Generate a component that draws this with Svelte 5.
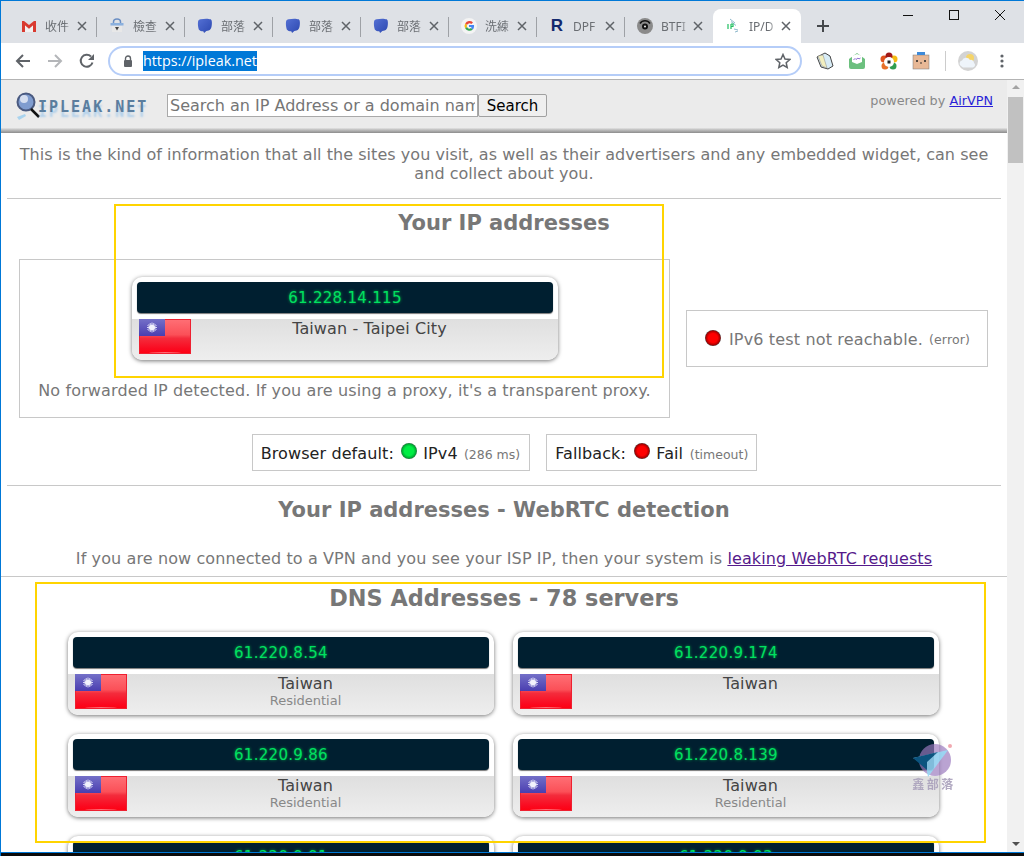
<script>
	const tabs = [
		{ icon: 'gmail', title: '收件' },
		{ icon: 'check', title: '檢查' },
		{ icon: 'bubble', title: '部落' },
		{ icon: 'bubble', title: '部落' },
		{ icon: 'bubble', title: '部落' },
		{ icon: 'google', title: '洗練' },
		{ icon: 'r', title: 'DPF' },
		{ icon: 'eye', title: 'BTFI' },
		{ icon: 'ip', title: 'IP/D', active: true }
	];

	const servers = [
		{ ip: '61.220.8.54', kind: 'Residential' },
		{ ip: '61.220.9.174', kind: '' },
		{ ip: '61.220.9.86', kind: 'Residential' },
		{ ip: '61.220.8.139', kind: 'Residential' },
		{ ip: '61.220.9.91', kind: 'Residential' },
		{ ip: '61.220.9.93', kind: 'Residential' }
	];
</script>

{#snippet flag()}
	<svg class="flag" width="52" height="35" viewBox="0 0 52 35">
		<defs>
			<linearGradient id="red" x1="0" y1="0" x2="0" y2="1">
				<stop offset="0" stop-color="#ff7076" />
				<stop offset="0.45" stop-color="#fb5058" />
				<stop offset="0.55" stop-color="#f42c3c" />
				<stop offset="0.85" stop-color="#fa0a20" />
				<stop offset="1" stop-color="#ff0010" />
			</linearGradient>
			<linearGradient id="blue" x1="0" y1="0" x2="0" y2="1">
				<stop offset="0" stop-color="#7470c8" />
				<stop offset="1" stop-color="#4a3eb0" />
			</linearGradient>
			<filter id="soft"><feGaussianBlur stdDeviation="0.35" /></filter>
		</defs>
		<rect width="52" height="35" fill="url(#red)" />
		<ellipse cx="26" cy="35" rx="18" ry="2" fill="#ff9aa0" opacity="0.7" />
		<rect x="0.5" y="0.5" width="51" height="34" fill="none" stroke="#ee2030" />
		<rect x="0" y="0" width="26" height="17" fill="url(#blue)" />
		<g filter="url(#soft)">
			<g stroke="#e8e8fa" stroke-width="0.9">
				<path d="M13 3.500v10M8 8.500h10M9.500 5l7 7M16.500 5l-7 7M11 4l4 9M15 4l-4 9M8.500 6.500l9 4M17.500 6.500l-9 4" />
			</g>
			<circle cx="13" cy="8.500" r="2.800" fill="#f2f2fc" />
		</g>
	</svg>
{/snippet}

{#snippet card(ip, top, sub)}
	<div class="card">
		<div class="ip">{ip}</div>
		<div class="info">
			{@render flag()}
			<div class="place">
				<div class="top">{top}</div>
				{#if sub}<div class="sub">{sub}</div>{/if}
			</div>
		</div>
	</div>
{/snippet}

<div class="window">
	<div class="strip">
		{#each tabs as tab}
			<div class="tab" class:active={tab.active}>
				<span class="fav">
					{#if tab.icon === 'gmail'}
						<svg width="16" height="16" viewBox="0 0 16 16"><path d="M1 3h2l5 4 5-4h2v11h-3V7.500L8 11 4 7.500V14H1z" fill="#d93a30" /><path d="M4 14V7.500L8 11l4-3.500V14" fill="#f1f1f1" /></svg>
					{:else if tab.icon === 'check'}
						<svg width="16" height="16" viewBox="0 0 16 16"><path d="M4.500 5V4a3.500 3 0 0 1 7 0v1" fill="none" stroke="#6a8ec4" stroke-width="1.500" /><rect x="1.500" y="5" width="13" height="2.500" fill="#8ab0de" /><rect x="3" y="8" width="10" height="6" fill="#e8e8e8" /><path d="M6 9h4l-2 3.500z" fill="#444" /></svg>
					{:else if tab.icon === 'bubble'}
						<svg width="18" height="18" viewBox="0 0 18 18"><defs><linearGradient id="bub" x1="0" y1="0" x2="1" y2="1"><stop offset="0" stop-color="#5470d4" /><stop offset="1" stop-color="#2c48b0" /></linearGradient></defs><path d="M4 1.500C8 .5 13 .5 15.500 1.500 17 2.500 17 6 16.500 9 16 12 15 13.500 13 14L10.500 14.500 8 17 7 15C5 15 3 14.500 2 13 1 10 .8 6 1.200 4 1.500 2.500 2.500 2 4 1.500z" fill="url(#bub)" /></svg>
					{:else if tab.icon === 'google'}
						<svg width="16" height="16" viewBox="0 0 16 16"><circle cx="8" cy="8" r="8" fill="#f4f4f4" /><path d="M12 4.500A5 5 0 0 0 4.200 5.500L6 7a2.800 2.800 0 0 1 4.300-1z" fill="#e8493a" /><path d="M4.200 5.500a5 5 0 0 0 0 5L6 9a2.800 2.800 0 0 1 0-2z" fill="#f5bb12" /><path d="M4.200 10.500a5 5 0 0 0 7.600 1L10 10a2.800 2.800 0 0 1-4-1z" fill="#35a853" /><path d="M13 7H8v2h2.700c-.2.500-.4.800-.7 1l1.800 1.500C12.800 10.500 13.300 8.800 13 7z" fill="#4486f4" /></svg>
					{:else if tab.icon === 'r'}
						<span class="rmark">R</span>
					{:else if tab.icon === 'eye'}
						<svg width="16" height="16" viewBox="0 0 16 16"><circle cx="8" cy="8" r="8" fill="#8a8a8a" /><path d="M3 5.500a6 6 0 0 1 10 0" fill="none" stroke="#111" stroke-width="1.500" /><circle cx="8" cy="8.500" r="3" fill="#111" /><circle cx="8" cy="8.500" r="1" fill="#eee" /></svg>
					{:else}
						<svg width="16" height="16" viewBox="0 0 16 16"><path d="M5 1l5 4M6 3.500l5 4M9 11l4 1M10 14l3-1" stroke="#8fb9cc" fill="none" /><path d="M3 6v5M6 6v5M6 6h2v2.500H6" stroke="#1fbf5f" stroke-width="1.200" fill="none" /></svg>
					{/if}
				</span>
				<span class="title">{tab.title}</span>
				<svg class="x" width="10" height="10" viewBox="0 0 10 10"><path d="M1 1l8 8M9 1l-8 8" stroke="#5f6368" stroke-width="1.500" /></svg>
			</div>
		{/each}
		<svg class="plus" width="14" height="14" viewBox="0 0 14 14"><path d="M7 1v12M1 7h12" stroke="#45484c" stroke-width="2" /></svg>
		<div class="controls">
			<svg width="46" height="30" viewBox="0 0 46 30"><path d="M18 14.500h10" stroke="#111" /></svg>
			<svg width="46" height="30" viewBox="0 0 46 30"><rect x="18.500" y="9.500" width="9" height="9" fill="none" stroke="#111" /></svg>
			<svg width="46" height="30" viewBox="0 0 46 30"><path d="M18 9l10 10M28 9L18 19" stroke="#111" /></svg>
		</div>
	</div>

	<div class="toolbar">
		<svg class="nav" width="16" height="16" viewBox="0 0 16 16"><path d="M15 8H2M8 2 2 8l6 6" fill="none" stroke="#5f6368" stroke-width="2" /></svg>
		<svg class="nav" width="16" height="16" viewBox="0 0 16 16"><path d="M1 8h13M8 2l6 6-6 6" fill="none" stroke="#b4b6b9" stroke-width="2" /></svg>
		<svg class="nav" width="16" height="16" viewBox="0 0 16 16"><path d="M13.500 9.500A6 6 0 1 1 12 3.500" fill="none" stroke="#5f6368" stroke-width="2" /><path d="M15 1v6H9z" fill="#5f6368" /></svg>
		<div class="address">
			<svg width="10" height="12" viewBox="0 0 10 12"><path d="M2.500 5V3.500a2.500 2.500 0 0 1 5 0V5" fill="none" stroke="#5f6368" stroke-width="1.400" /><rect x="1" y="5" width="8" height="7" rx="1" fill="#5f6368" /></svg>
			<span class="url">https://ipleak.net</span>
			<svg class="star" width="16" height="16" viewBox="0 0 16 16"><path d="M8 1.500l2 4.500 4.800.5-3.600 3.200 1 4.800L8 12.100l-4.200 2.400 1-4.800L1.200 6.500 6 6z" fill="none" stroke="#5f6368" stroke-width="1.500" /></svg>
		</div>
		<div class="exts">
			<svg width="18" height="18" viewBox="0 0 18 18"><path d="M1 5l8-4 5 3 3 10-5 3-7-2z" fill="#d8ecf6" stroke="#444" /><path d="M2 4l5-1 4 13-5-2z" fill="#f2efc0" stroke="#888" stroke-width=".5" /></svg>
			<svg width="18" height="18" viewBox="0 0 18 18"><path d="M1 7l8-6 8 6v8a2 2 0 0 1-2 2H3a2 2 0 0 1-2-2z" fill="#6cc07e" /><path d="M4 4l5-2 5 2v6l-5 2-5-2z" fill="#fff" /><path d="M5.500 8l1.500-1.500 1 1L10 6l1 1 1.500-1" fill="none" stroke="#8d6fd0" /></svg>
			<svg width="18" height="18" viewBox="0 0 18 18"><circle cx="4" cy="7" r="3.500" fill="#e0541f" /><circle cx="14" cy="7" r="3.500" fill="#f5bb12" /><circle cx="5" cy="14" r="3.500" fill="#e8702a" /><circle cx="13" cy="14" r="3.500" fill="#2f9e4f" /><circle cx="9" cy="4" r="3.500" fill="#a01818" /><circle cx="9" cy="10" r="5" fill="#fff" /><rect x="7.500" y="8.500" width="3" height="3" fill="#222" /></svg>
			<svg width="18" height="18" viewBox="0 0 18 18"><rect x="1" y="3" width="16" height="14" fill="#e8b896" stroke="#777" stroke-width=".5" /><rect x="5" y="0" width="8" height="3" fill="#3f8ad8" /><circle cx="5" cy="9" r="1" fill="#222" /><circle cx="13" cy="9" r="1" fill="#222" /><circle cx="9" cy="11" r=".8" fill="#222" /></svg>
		</div>
		<span class="tool-sep"></span>
		<span class="avatar">
			<svg width="20" height="20" viewBox="0 0 20 20"><circle cx="12" cy="7" r="4" fill="#f5d468" /><path d="M3 15a3 3 0 0 1 1-5.500 4.500 4.500 0 0 1 8-.5 3 3 0 0 1 4 3 2.500 2.500 0 0 1-1 4.500H5z" fill="#eef4fa" /></svg>
		</span>
		<svg class="dots" width="4" height="14" viewBox="0 0 4 14"><circle cx="2" cy="2" r="1.600" fill="#5f6368" /><circle cx="2" cy="7" r="1.600" fill="#5f6368" /><circle cx="2" cy="12" r="1.600" fill="#5f6368" /></svg>
	</div>

	<div class="viewport">
		<main class="page">
			<header class="head">
				<div class="logo">
					<svg width="26" height="30" viewBox="0 0 26 30"><circle cx="11" cy="10" r="8.500" fill="#7f9ccf" stroke="#4a5a80" stroke-width="2" /><circle cx="9" cy="7" r="4" fill="#d5def0" /><path d="M16 17l8 8" stroke="#111" stroke-width="2.500" /><path d="M2 25l8-3 1 2-7 4z" fill="#a9d3ee" /></svg>
					<span>IPLEAK.NET</span>
				</div>
				<div class="search">
					<input placeholder="Search an IP Address or a domain name" />
					<button>Search</button>
				</div>
				<div class="powered">powered by <a href="#top">AirVPN</a></div>
			</header>

			<p class="intro">This is the kind of information that all the sites you visit, as well as their advertisers and any embedded widget, can see and collect about you.</p>
			<hr />
			<h2 class="first">Your IP addresses</h2>

			<div class="ip-row">
				<div class="box main-box">
					{@render card('61.228.14.115', 'Taiwan - Taipei City', '')}
					<p class="note">No forwarded IP detected. If you are using a proxy, it's a transparent proxy.</p>
				</div>
				<div class="box v6">
					<span class="bulb red"></span>
					<span class="v6-text">IPv6 test not reachable.</span>
					<small>(error)</small>
				</div>
			</div>

			<div class="status-row">
				<div class="box status">
					Browser default: <span class="bulb green"></span> IPv4 <small>(286 ms)</small>
				</div>
				<div class="box status fallback">
					Fallback: <span class="bulb red"></span> Fail <small>(timeout)</small>
				</div>
			</div>

			<hr class="second" />
			<h2 class="webrtc">Your IP addresses - WebRTC detection</h2>
			<p class="leak">If you are now connected to a VPN and you see your ISP IP, then your system is <a href="#top">leaking WebRTC requests</a></p>
			<hr class="full" />
			<h2 class="dns">DNS Addresses - 78 servers</h2>

			<div class="grid">
				{#each servers as s}
					{@render card(s.ip, 'Taiwan', s.kind)}
				{/each}
			</div>
		</main>
		<aside class="scrollbar">
			<span class="arrow up"></span>
			<span class="thumb"></span>
			<span class="arrow down"></span>
		</aside>
	</div>

	<div class="taskbar">
		<span class="chip c1"></span>
		<span class="chip c2"></span>
	</div>

	<div class="mark one"></div>
	<div class="mark two"></div>
	<div class="stamp">
		<svg width="44" height="36" viewBox="0 0 44 36">
			<circle cx="23" cy="18" r="16" fill="#9a78bd" opacity="0.75" />
			<circle cx="38" cy="4" r="2" fill="#f0a0a8" />
			<path d="M1 16 36 8 16 35 14 24z" fill="#8fd4f2" opacity="0.95" />
			<path d="M1 16 26 10 15 20l0 8z" fill="#0d5a88" />
		</svg>
		<span>鑫部落</span>
	</div>
</div>

<style>
	:global(body) {
		margin: 0;
	}

	.window {
		position: relative;
		width: 1024px;
		height: 856px;
		box-sizing: border-box;
		border-top: 1px solid #0078d7;
		border-left: 1px solid #0078d7;
		display: flex;
		flex-direction: column;
		overflow: hidden;
		font-family: 'DejaVu Sans', sans-serif;
		background: #fff;
	}

	.strip {
		height: 42px;
		flex: none;
		box-sizing: border-box;
		padding: 8px 0 0 8px;
		background: #dee1e6;
		display: flex;
		position: relative;
	}

	.tab {
		width: 88px;
		height: 34px;
		flex: none;
		box-sizing: border-box;
		padding-left: 12px;
		display: flex;
		align-items: center;
		position: relative;
		font-family: 'Noto Sans', 'Noto Sans CJK TC', sans-serif;
		font-size: 12px;
		color: #6a6e73;
	}

	.tab::after {
		content: '';
		position: absolute;
		right: 0;
		top: 8px;
		height: 20px;
		width: 1px;
		background: #9ea1a6;
	}

	.tab:nth-child(n + 8)::after {
		display: none;
	}

	.tab.active {
		background: #fff;
		border-radius: 8px 8px 0 0;
	}

	.fav {
		width: 16px;
		height: 18px;
		flex: none;
		display: flex;
		align-items: center;
		justify-content: center;
	}

	.rmark {
		font: 900 17px 'Liberation Sans', sans-serif;
		color: #14296e;
	}

	.title {
		margin-left: 8px;
		width: 28px;
		flex: none;
		white-space: nowrap;
		overflow: hidden;
		-webkit-mask-image: linear-gradient(90deg, #000 70%, transparent);
		mask-image: linear-gradient(90deg, #000 70%, transparent);
	}

	.x {
		margin-left: 4px;
		flex: none;
	}

	.plus {
		margin: 10px 0 0 15px;
		flex: none;
	}

	.controls {
		position: absolute;
		right: 1px;
		top: 0;
		display: flex;
	}

	.toolbar {
		height: 36px;
		flex: none;
		border-bottom: 1px solid #b3b3b3;
		display: flex;
		align-items: center;
		padding-left: 14px;
		background: #fff;
	}

	.nav {
		margin-right: 16px;
		flex: none;
	}

	.nav:nth-child(3) {
		margin-right: 13px;
	}

	.address {
		width: 694px;
		height: 30px;
		box-sizing: border-box;
		border: 2px solid #b5cdf8;
		border-radius: 15px;
		display: flex;
		align-items: center;
		padding: 0 9px 0 13px;
		flex: none;
	}

	.url {
		margin-left: 10px;
		height: 20px;
		background: #0078d7;
		color: #fff;
		font: 14.300px/20px 'Open Sans', sans-serif;
	}

	.star {
		margin-left: auto;
	}

	.exts {
		display: flex;
		gap: 14px;
		margin-left: 14px;
	}

	.tool-sep {
		width: 1px;
		height: 20px;
		background: #ccc;
		margin-left: 15px;
	}

	.avatar {
		width: 20px;
		height: 20px;
		border-radius: 50%;
		background: #d3d3d3;
		margin-left: 12px;
	}

	.dots {
		margin-left: 22px;
	}

	.viewport {
		flex: 1;
		min-height: 0;
		display: flex;
		overflow: hidden;
	}

	.page {
		width: 1006px;
		flex: none;
		color: #777;
		font-size: 16px;
		overflow: hidden;
	}

	.scrollbar {
		flex: 1;
		background: #f1f1f1;
		display: flex;
		flex-direction: column;
		align-items: center;
	}

	.thumb {
		width: 15px;
		height: 66px;
		background: #c1c1c1;
		margin-top: 8px;
	}

	.arrow {
		width: 0;
		height: 0;
		border-left: 4px solid transparent;
		border-right: 4px solid transparent;
	}

	.arrow.up {
		border-bottom: 4px solid #a3a3a3;
		margin-top: 5px;
	}

	.arrow.down {
		border-top: 4px solid #505050;
		margin-top: auto;
		margin-bottom: 6px;
	}

	.head {
		height: 53px;
		box-sizing: border-box;
		padding: 12px 14px 0 14px;
		display: flex;
		align-items: flex-start;
		background: linear-gradient(#ebebeb 0, #ebebeb 90%, #c8c8c8 93%, #8c8c8c 100%);
	}

	.logo {
		width: 152px;
		display: flex;
		align-items: center;
		height: 30px;
	}

	.logo span {
		margin-left: -3px;
		font: bold 15px 'DejaVu Sans Mono', monospace;
		letter-spacing: 2px;
		color: #5a7d9e;
		text-shadow: 0 5px 2px rgba(130, 185, 235, 0.55);
	}

	.search {
		display: flex;
		margin-top: 2px;
	}

	input {
		width: 311px;
		height: 23px;
		box-sizing: border-box;
		border: 1px solid #a9a9a9;
		padding: 0 2px;
		font: 16px 'DejaVu Sans', sans-serif;
		background: #fff;
	}

	input::placeholder {
		color: #757575;
		opacity: 1;
	}

	button {
		width: 69px;
		height: 23px;
		box-sizing: border-box;
		border: 1px solid #a0a0a0;
		border-radius: 2px;
		background: #efefef;
		padding: 0;
		font: 15px 'DejaVu Sans', sans-serif;
		color: #000;
	}

	.powered {
		margin-left: auto;
		font-size: 12.800px;
		line-height: 18px;
		color: #888;
	}

	.powered a {
		color: #2a1fd6;
	}

	p {
		margin: 0;
		text-align: center;
	}

	.intro {
		margin: 13px 8px 0;
		line-height: 18.500px;
		letter-spacing: 0.040px;
	}

	hr {
		border: 0;
		height: 1px;
		background: #c8c8c8;
		margin: 0 6px;
	}

	.intro + hr {
		margin-top: 15px;
	}

	h2 {
		margin: 0;
		text-align: center;
		font-size: 21px;
		line-height: 26px;
		font-weight: bold;
		color: #777;
	}

	.first {
		margin-top: 11px;
	}

	.ip-row {
		display: flex;
		align-items: center;
		gap: 16px;
		margin: 23px 0 0 18px;
	}

	.box {
		border: 1px solid #c8c8c8;
		box-sizing: border-box;
	}

	.main-box {
		width: 651px;
		height: 159px;
		padding: 17px 112px 0;
	}

	.note {
		margin: 20px -100px 0;
		line-height: 22px;
		letter-spacing: 0.130px;
		white-space: nowrap;
	}

	.card {
		width: 426px;
		height: 83px;
		box-sizing: border-box;
		padding-top: 5px;
		border-radius: 10px;
		background: #fff;
		box-shadow: 0 1px 4px rgba(0, 0, 0, 0.55);
		overflow: hidden;
		display: flex;
		flex-direction: column;
	}

	.ip {
		height: 31px;
		flex: none;
		margin: 0 5px;
		background: #001f30;
		border-radius: 4px;
		text-align: center;
		line-height: 32px;
		font-size: 15px;
		letter-spacing: 0.300px;
		color: #00e060;
		text-shadow: 0 0 3px #00a848;
		box-shadow: 0 1px 1px #777;
	}

	.info {
		flex: 1;
		margin-top: 6px;
		background: linear-gradient(#dfdfdf, #eeeeee);
		display: flex;
		padding-left: 7px;
	}

	.flag {
		flex: none;
	}

	.place {
		flex: 1;
		text-align: center;
		padding-right: 10px;
		line-height: 19px;
		letter-spacing: 0.100px;
		color: #444;
	}

	.sub {
		font-size: 13px;
		line-height: 15px;
		letter-spacing: 0;
		color: #888;
	}

	.v6 {
		width: 302px;
		height: 57px;
		display: flex;
		align-items: center;
		padding-left: 18px;
		white-space: pre-wrap;
	}

	.v6 .bulb {
		margin: -2px 8px 0 0;
	}

	.v6-text,
	.v6 small {
		padding-top: 2px;
		letter-spacing: 0.150px;
	}

	small {
		font-size: 12.500px;
		margin-left: 6px;
	}

	.bulb {
		display: inline-block;
		width: 16px;
		height: 16px;
		border-radius: 50%;
		box-sizing: border-box;
		vertical-align: 0;
		margin: 0 1px 0 2px;
	}

	.bulb.red {
		background: radial-gradient(circle at 50% 50%, #f00 40%, #a00 62%, #444 72%, #999 100%);
	}

	.bulb.green {
		background: radial-gradient(circle at 50% 50%, #0e4 40%, #0a3 62%, #364 72%, #aaa 100%);
	}

	.status-row {
		display: flex;
		justify-content: center;
		gap: 16px;
		margin-top: 16px;
		padding-left: 1px;
	}

	.status {
		height: 37px;
		line-height: 37px;
		padding: 0 9px 0 8px;
		color: #222;
		white-space: nowrap;
		letter-spacing: 0.100px;
	}

	.status.fallback {
		padding-right: 8px;
		word-spacing: 0.500px;
	}

	.status small {
		color: #777;
		margin-left: 1px;
		letter-spacing: 0;
	}

	.second {
		margin-top: 14px;
	}

	.webrtc {
		margin-top: 11px;
	}

	.leak {
		margin-top: 26px;
		line-height: 20px;
		letter-spacing: 0.110px;
	}

	.leak a {
		color: #551a8b;
	}

	.full {
		margin: 7px 0 0;
	}

	.dns {
		margin-top: 8px;
		font-size: 22.400px;
	}

	.grid {
		display: grid;
		grid-template-columns: 426px 426px;
		gap: 19px 19px;
		margin: 21px 0 0 67px;
	}

	.taskbar {
		height: 3px;
		flex: none;
		border-top: 1px solid #0078d7;
		background: #0b0b0b;
		display: flex;
		padding-left: 150px;
	}

	.chip {
		height: 3px;
	}

	.c1 {
		width: 16px;
		background: #c33;
	}

	.c2 {
		width: 16px;
		margin-left: 920px;
		background: #999;
	}

	.mark {
		position: absolute;
		border: 2px solid #ffd400;
		box-sizing: border-box;
		pointer-events: none;
	}

	.mark.one {
		left: 113px;
		top: 203px;
		width: 550px;
		height: 174px;
	}

	.mark.two {
		left: 34px;
		top: 581px;
		width: 951px;
		height: 261px;
	}

	.stamp {
		position: absolute;
		left: 911px;
		top: 741px;
		width: 44px;
		display: flex;
		flex-direction: column;
		align-items: center;
		opacity: 0.9;
	}

	.stamp span {
		font: bold 12px 'Noto Sans CJK TC', sans-serif;
		color: #a9a0bb;
		white-space: nowrap;
		letter-spacing: 2.500px;
		margin-top: -3px;
	}
</style>
